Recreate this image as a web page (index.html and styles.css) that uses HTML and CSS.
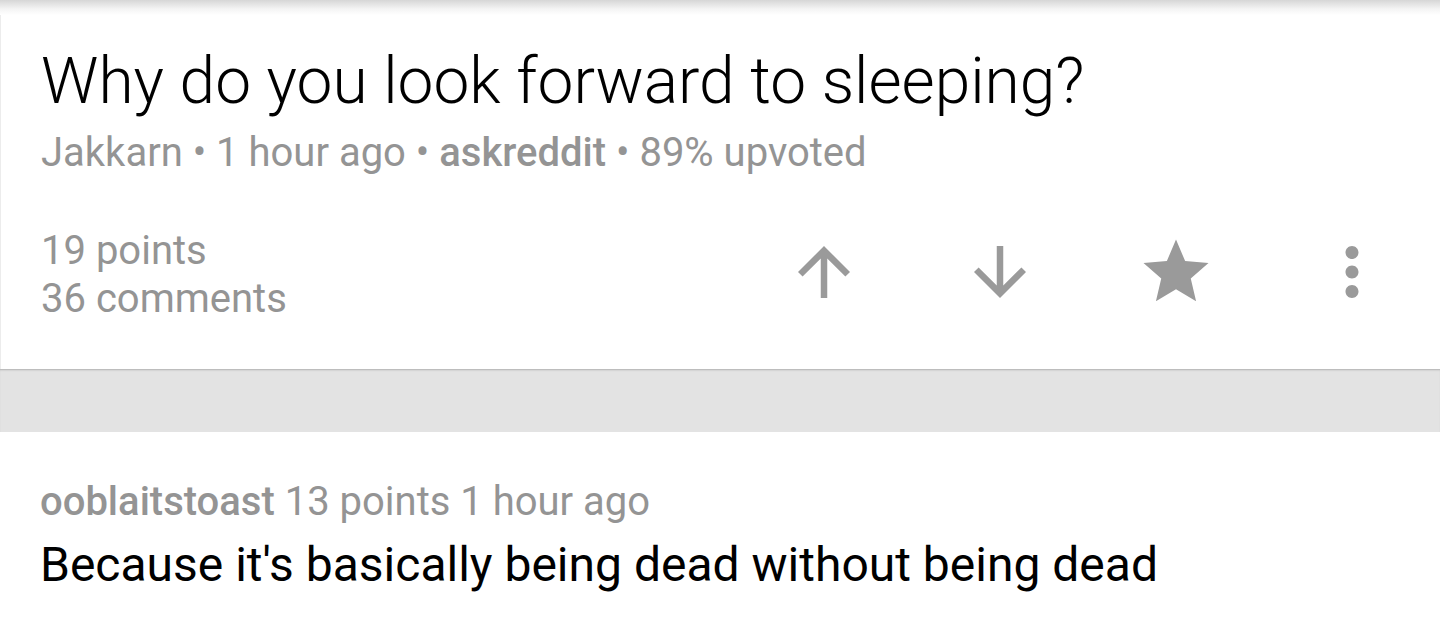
FILE: index.html
```
<!DOCTYPE html>
<html>
<head>
	<title>Why do you look forward to sleeping?</title>
	<link rel="stylesheet" href="styles.css">
</head>
<body>
	<div class="shade"></div>
	<div class="post">
		<h1 class="post_title">Why do you look forward to sleeping?</h1>
		<div class="post_meta">Jakkarn &bull; 1 hour ago &bull; <b>askreddit</b> &bull; 89% upvoted</div>
		<div class="post_bar">
			<div class="post_stats">
				<div>19 points</div>
				<div>36 comments</div>
			</div>
			<div class="actions">
				<div class="action">
					<svg viewBox="0 0 24 24"><path d="M4 12l1.41 1.41L11 7.83V20h2V7.83l5.58 5.59L20 12l-8-8-8 8z"/></svg>
				</div>
				<div class="action">
					<svg viewBox="0 0 24 24"><path d="M20 12l-1.41-1.41L13 16.17V4h-2v12.17l-5.58-5.59L4 12l8 8 8-8z"/></svg>
				</div>
				<div class="action">
					<svg viewBox="0 0 24 24"><path d="M12 17.27L18.18 21l-1.64-7.030L22 9.24l-7.19-.61L12 2 9.19 8.63 2 9.24l5.46 4.73L5.82 21z"/></svg>
				</div>
				<div class="action">
					<svg viewBox="0 0 24 24"><path d="M12 8c1.1 0 2-.9 2-2s-.9-2-2-2-2 .9-2 2 .9 2 2 2zm0 2c-1.1 0-2 .9-2 2s.9 2 2 2 2-.9 2-2-.9-2-2-2zm0 6c-1.1 0-2 .9-2 2s.9 2 2 2 2-.9 2-2-.9-2-2-2z"/></svg>
				</div>
			</div>
		</div>
	</div>
	<div class="divider"></div>
	<div class="comment">
		<div class="comment_meta"><b>ooblaitstoast</b> 13 points 1 hour ago</div>
		<div class="comment_body">Because it's basically being dead without being dead</div>
	</div>
</body>
</html>
```

FILE: styles.css
```
* {
	margin: 0;
	box-sizing: border-box;
}
body {
	width: 1440px;
	height: 624px;
	overflow: hidden;
	background: white;
	font-family: Roboto, "Noto Sans", sans-serif;
}

/* top shadow of the toolbar */
div.shade {
	height: 15px;
	background: linear-gradient(#d6d6d6, #f4f4f4 60%, white);
}

/* post card */
div.post {
	padding: 27px 0 46px 40px;
	border-left: 1px solid #ececec;
}
h1.post_title {
	font-size: 64px;
	font-weight: 300;
	line-height: 80px;
	color: #000;
}
div.post_meta {
	margin-top: 7px;
	font-size: 40px;
	line-height: 48px;
	color: #949494;
}
div.post_meta b,
div.comment_meta b {
	font-weight: 500;
}
div.post_bar {
	display: flex;
	justify-content: space-between;
	margin-top: 50px;
}
div.post_stats {
	font-size: 40px;
	line-height: 48px;
	color: #949494;
}
div.actions {
	display: flex;
	margin-top: 6px;
}
div.action {
	width: 176px;
	display: flex;
	justify-content: center;
}
div.action svg {
	width: 78px;
	height: 78px;
	fill: #9a9a9a;
}

/* gap between post and comments */
div.divider {
	height: 63px;
	background: #e3e3e3;
	box-shadow: inset 0 2px 2px -1px #b0b0b0;
}

/* comment */
div.comment {
	padding: 46px 0 0 40px;
}
div.comment_meta {
	font-size: 40px;
	line-height: 48px;
	color: #949494;
}
div.comment_body {
	margin-top: 11px;
	font-size: 48px;
	line-height: 56px;
	color: #000;
}
```
